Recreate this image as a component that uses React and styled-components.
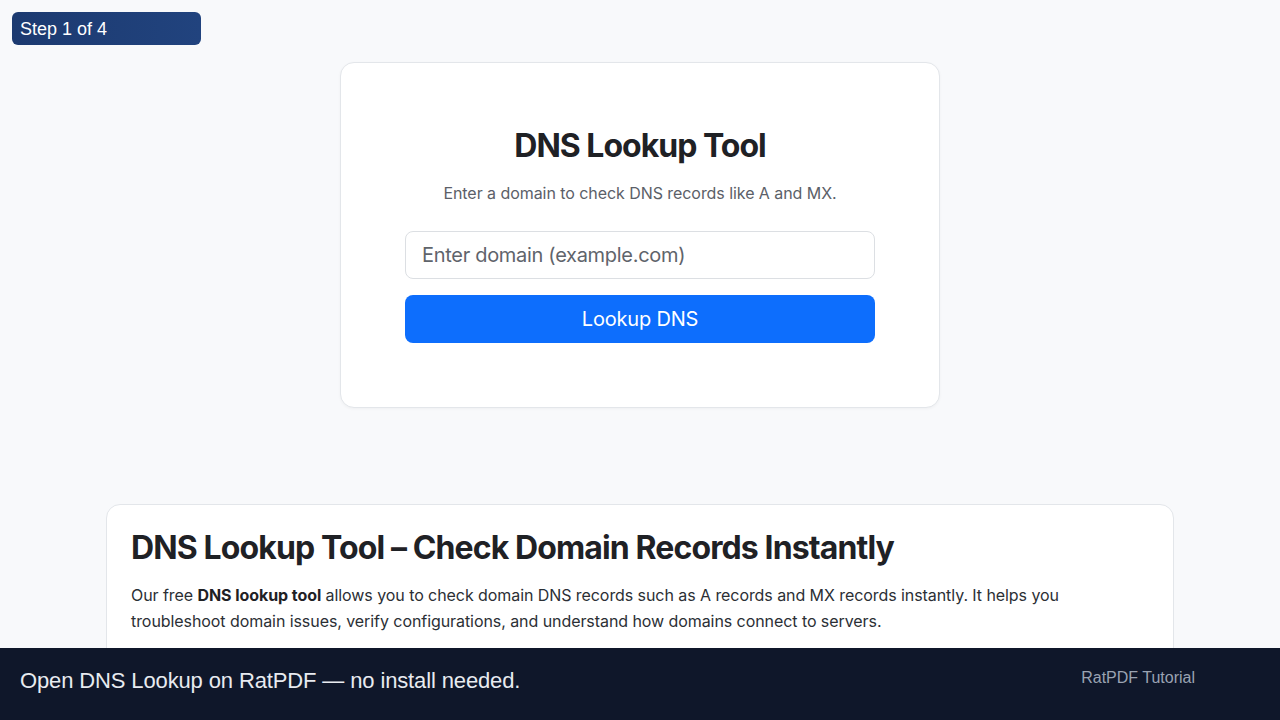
import React from "react";
import styled, { createGlobalStyle } from "styled-components";

const Global = createGlobalStyle`
  html, body { margin: 0; padding: 0; }
  body {
    background: #f8f9fb;
    font-family: Inter, "Noto Sans", sans-serif;
    color: #212529;
  }
  * { box-sizing: border-box; }
`;

const Page = styled.div`
  display: flex;
  flex-direction: column;
  align-items: center;
  padding-top: 62px;
  gap: 96px;
  min-height: 720px;
`;

const ToolCard = styled.section`
  width: 600px;
  background: #fff;
  border: 1px solid #e3e6ea;
  border-radius: 14px;
  padding: 64px;
  display: flex;
  flex-direction: column;
  align-items: stretch;
  box-shadow: 0 1px 3px rgba(0, 0, 0, 0.04);
`;

const Title = styled.h1`
  margin: 0;
  font-size: 32px;
  line-height: 38px;
  font-weight: 700;
  text-align: center;
  color: #1f2125;
  letter-spacing: -1px;
`;

const Subtitle = styled.p`
  margin: 16px 0 26px;
  font-size: 16px;
  line-height: 24px;
  text-align: center;
  color: #5b6068;
  letter-spacing: -0.06px;
`;

const Input = styled.input`
  height: 48px;
  width: 100%;
  border: 1px solid #dcdfe3;
  border-radius: 8px;
  padding: 0 16px;
  font-family: Inter, sans-serif;
  font-size: 20px;
  letter-spacing: -0.3px;
  color: #212529;
  outline: none;
  &::placeholder { color: #5f646b; }
`;

const Button = styled.button`
  margin-top: 16px;
  height: 48px;
  width: 100%;
  border: none;
  border-radius: 8px;
  background: #0d6efd;
  color: #fff;
  font-family: Inter, sans-serif;
  font-size: 20px;
  letter-spacing: -0.2px;
  cursor: pointer;
`;

const InfoCard = styled.section`
  width: 1068px;
  background: #fff;
  border: 1px solid #e3e6ea;
  border-radius: 14px;
  padding: 24px 24px 40px;
`;

const InfoTitle = styled.h2`
  margin: 0 0 15px;
  font-size: 32px;
  line-height: 38px;
  font-weight: 700;
  color: #1f2125;
  letter-spacing: -0.88px;
`;

const InfoText = styled.p`
  margin: 0;
  font-size: 16px;
  line-height: 26px;
  color: #2b2f35;
  letter-spacing: -0.07px;
  b { font-weight: 700; color: #1f2125; }
`;

const StepBadge = styled.div`
  position: fixed;
  top: 12px;
  left: 12px;
  width: 189px;
  height: 33px;
  border-radius: 6px;
  background: linear-gradient(90deg, #1c3a70, #21437e);
  color: #fff;
  font-family: "Liberation Sans", Arial, sans-serif;
  font-size: 18px;
  line-height: 33px;
  padding: 1px 0 0 8px;
`;

const Footer = styled.footer`
  position: fixed;
  left: 0;
  right: 0;
  bottom: 0;
  height: 72px;
  background: #0f172a;
  display: flex;
  justify-content: space-between;
  align-items: flex-start;
  padding: 20px 85px 0 20px;
  font-family: "Liberation Sans", Arial, sans-serif;
`;

const FooterText = styled.span`
  font-size: 22px;
  line-height: 26px;
  letter-spacing: -0.13px;
  color: #e8ebf0;
`;

const FooterLabel = styled.span`
  font-size: 16px;
  line-height: 20px;
  color: #9aa3b2;
`;

export default function App() {
  return (
    <>
      <Global />
      <Page>
        <ToolCard>
          <Title>DNS Lookup Tool</Title>
          <Subtitle>Enter a domain to check DNS records like A and MX.</Subtitle>
          <Input placeholder="Enter domain (example.com)" />
          <Button>Lookup DNS</Button>
        </ToolCard>
        <InfoCard>
          <InfoTitle>DNS Lookup Tool – Check Domain Records Instantly</InfoTitle>
          <InfoText>
            Our free <b>DNS lookup tool</b> allows you to check domain DNS records such as A records and MX
            records instantly. It helps you troubleshoot domain issues, verify configurations, and understand how
            domains connect to servers.
          </InfoText>
        </InfoCard>
      </Page>
      <StepBadge>Step 1 of 4</StepBadge>
      <Footer>
        <FooterText>Open DNS Lookup on RatPDF — no install needed.</FooterText>
        <FooterLabel>RatPDF Tutorial</FooterLabel>
      </Footer>
    </>
  );
}
